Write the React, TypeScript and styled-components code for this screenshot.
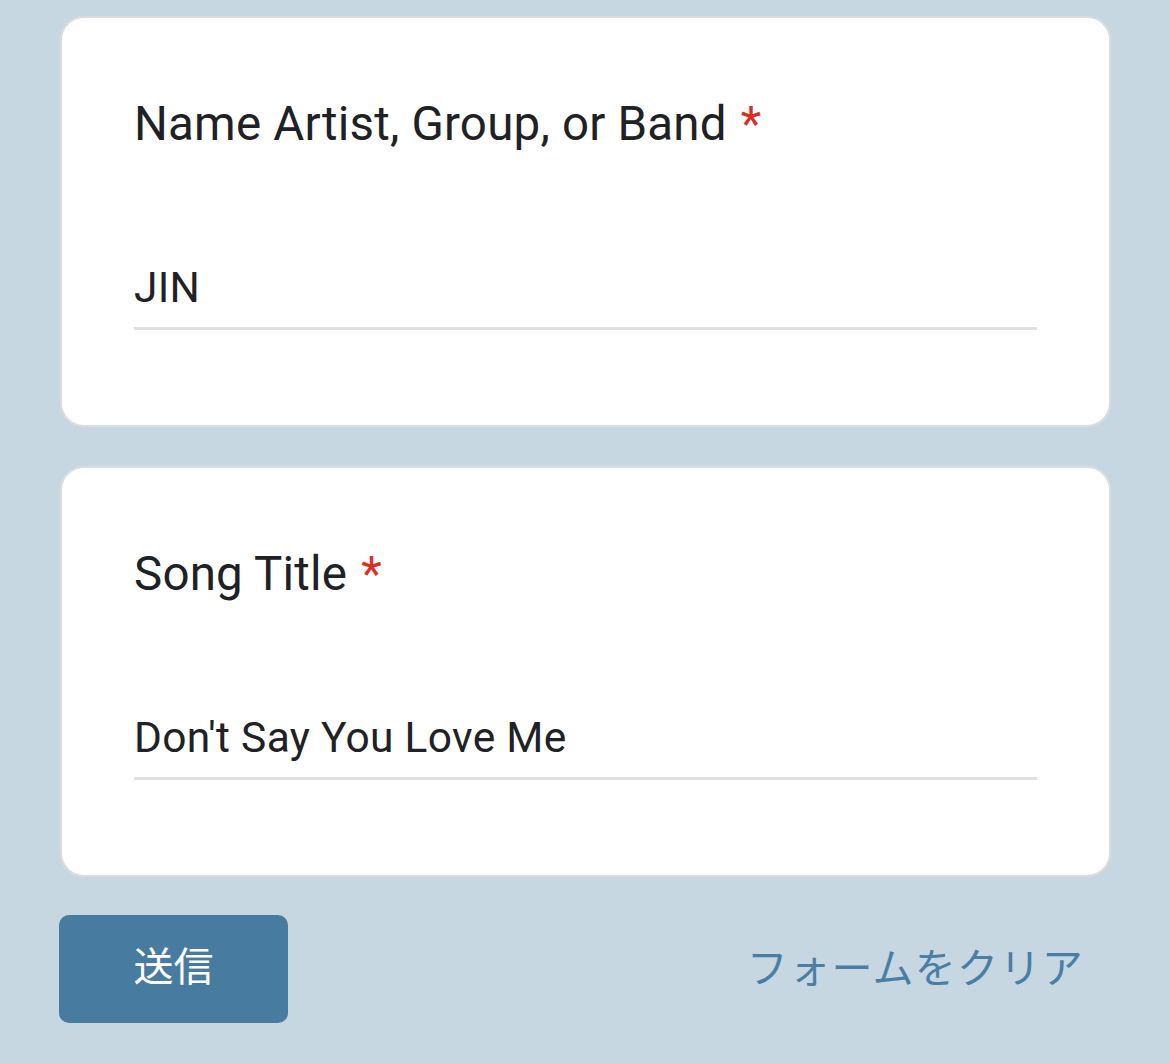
import React from "react";
import styled, { createGlobalStyle } from "styled-components";

const Global = createGlobalStyle`
  html, body {
    margin: 0;
    padding: 0;
    background: #c7d7e2;
  }
  body {
    font-family: Roboto, "Noto Sans CJK JP", sans-serif;
  }
`;

const Page = styled.div`
  box-sizing: border-box;
  width: 1170px;
  min-height: 1063px;
  padding: 16px 59px 40px 60px;
  display: flex;
  flex-direction: column;
  gap: 39px;
`;

const Card = styled.section`
  box-sizing: border-box;
  height: 411px;
  background: #ffffff;
  border: 2px solid #dadce0;
  border-radius: 24px;
  padding: 76px 72px 0 72px;
  display: flex;
  flex-direction: column;
`;

const Title = styled.div`
  font-family: Roboto, sans-serif;
  font-size: 47.5px;
  line-height: 60px;
  color: #202124;
  letter-spacing: 0.2px;
`;

const Required = styled.span`
  color: #d93025;
  margin-left: 14px;
`;

const Field = styled.div`
  margin-top: 110px;
  border-bottom: 3px solid #e0e0e0;
  padding-bottom: 15px;
  font-family: Roboto, sans-serif;
  font-size: 42.5px;
  line-height: 48px;
  color: #202124;
  letter-spacing: 0.3px;
`;

const Footer = styled.div`
  display: flex;
  align-items: center;
  justify-content: space-between;
  margin-top: -1px;
`;

const SubmitButton = styled.button`
  width: 229px;
  height: 108px;
  border: none;
  border-radius: 10px;
  background: #477ca0;
  color: #ffffff;
  font-family: "Noto Sans CJK JP", sans-serif;
  font-size: 40px;
  font-weight: 400;
  margin-left: -1px;
  padding: 0 0 10px 0;
`;

const ClearLink = styled.span`
  font-family: "Noto Sans CJK JP", sans-serif;
  font-size: 41px;
  font-weight: 400;
  color: #4a7fa3;
  margin-right: 27px;
  margin-top: -8px;
  letter-spacing: 1.3px;
`;

export default function App() {
  return (
    <>
      <Global />
      <Page>
        <Card>
          <Title>
            Name Artist, Group, or Band<Required>*</Required>
          </Title>
          <Field>JIN</Field>
        </Card>
        <Card>
          <Title>
            Song Title<Required>*</Required>
          </Title>
          <Field>Don't Say You Love Me</Field>
        </Card>
        <Footer>
          <SubmitButton>送信</SubmitButton>
          <ClearLink>フォームをクリア</ClearLink>
        </Footer>
      </Page>
    </>
  );
}
